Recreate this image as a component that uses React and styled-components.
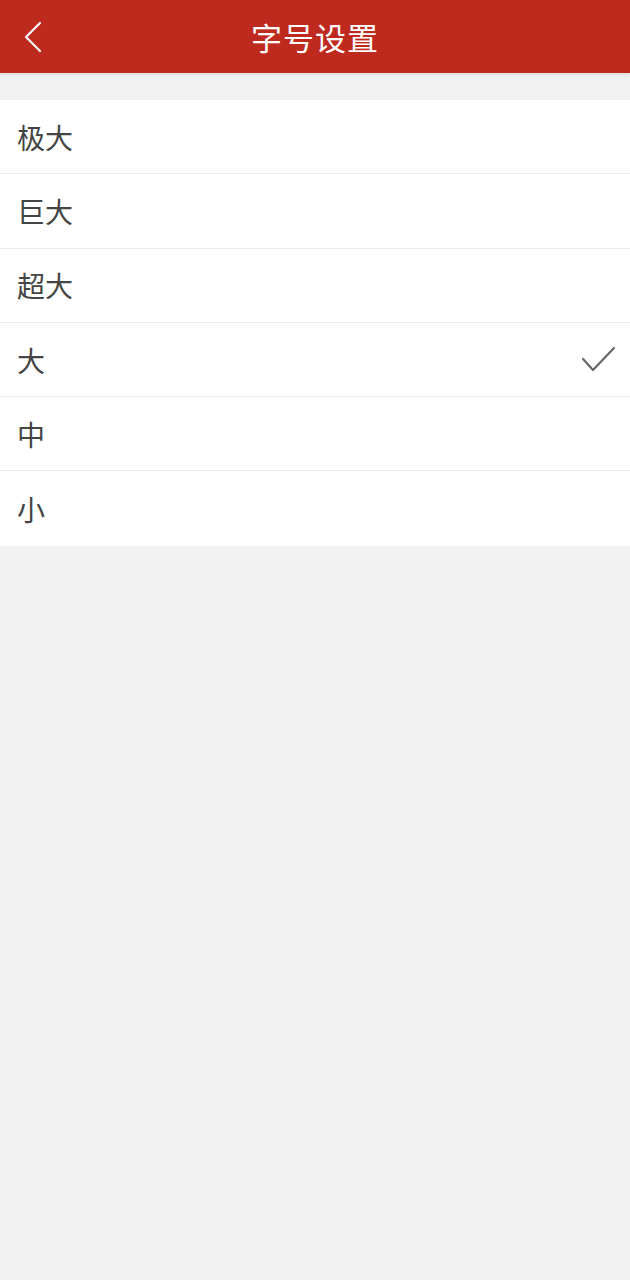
import React, { useState } from 'react'
import styled, { createGlobalStyle } from 'styled-components'

const GlobalStyle = createGlobalStyle`
html, body {
	margin: 0;
	padding: 0;
	background: #f1f1f1;
	font-family: "Noto Sans CJK SC", "Noto Sans", sans-serif;
}
`

const sizes = ['极大', '巨大', '超大', '大', '中', '小']

const App = () =>
{
	const [selected, setSelected] = useState('大')

	return (
		<Page>
			<GlobalStyle />
			<Header>
				<BackButton aria-label="返回">
					<svg width="22" height="34" viewBox="0 0 22 34" fill="none">
						<path d="M18 3 L4 17 L18 31" stroke="#fff" strokeWidth="2.2" strokeLinecap="round" strokeLinejoin="round" />
					</svg>
				</BackButton>
				<Title>字号设置</Title>
			</Header>
			<List>
				{sizes.map((size) =>
				{
					return (
						<Row key={size} onClick={() => setSelected(size)}>
							<Label>{size}</Label>
							{selected === size && (
								<svg width="36" height="28" viewBox="0 0 36 28" fill="none">
									<path d="M3 13 L13 24 L34 2" stroke="#666" strokeWidth="2.2" strokeLinecap="round" strokeLinejoin="round" />
								</svg>
							)}
						</Row>
					)
				})}
			</List>
		</Page>
	)
}

const Page = styled.div`
min-height: 1280px;
background: #f1f1f1;
`

const Header = styled.div`
position: relative;
height: 73px;
background: #bf2a1f;
display: flex;
align-items: center;
justify-content: center;
box-shadow: 0 1px 3px rgba(0, 0, 0, 0.12);
`

const BackButton = styled.button`
position: absolute;
left: 22px;
top: 20px;
padding: 0;
border: 0;
background: none;
display: flex;
cursor: pointer;
`

const Title = styled.h1`
margin: 0;
color: #fff;
font-size: 31px;
font-weight: 400;
letter-spacing: 1px;
`

const List = styled.div`
margin-top: 27px;
background: #fff;
`

const Row = styled.div`
height: 74.3px;
box-sizing: border-box;
padding: 0 14px 0 17px;
display: flex;
align-items: center;
justify-content: space-between;
border-bottom: 1px solid #ececec;
&:last-child {
	border-bottom: 0;
}
`

const Label = styled.span`
font-size: 28px;
color: #444;
`

export default App
